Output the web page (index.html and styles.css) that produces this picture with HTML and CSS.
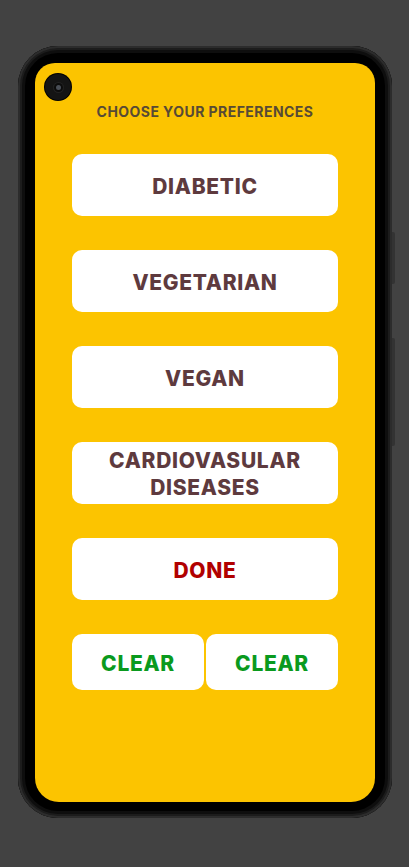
FILE: index.html
```html
<!DOCTYPE html>
<html lang="en">
<head>
<meta charset="utf-8">
<title>Choose your preferences</title>
<link rel="stylesheet" href="styles.css">
</head>
<body>
<div class="phone">
  <span class="side-btn vol"></span>
  <span class="side-btn power"></span>
  <div class="screen">
    <span class="camera"><span class="lens"></span></span>
    <h1 class="title">CHOOSE YOUR PREFERENCES</h1>
    <div class="options">
      <button class="opt">DIABETIC</button>
      <button class="opt">VEGETARIAN</button>
      <button class="opt">VEGAN</button>
      <button class="opt two-line">CARDIOVASULAR<br>DISEASES</button>
      <button class="opt done">DONE</button>
      <div class="clear-row">
        <button class="opt clear">CLEAR</button>
        <button class="opt clear">CLEAR</button>
      </div>
    </div>
  </div>
</div>
</body>
</html>
```
FILE: styles.css
```css
html, body {
  margin: 0;
  padding: 0;
  background: #424242;
  width: 409px;
  height: 867px;
  overflow: hidden;
}
body {
  padding-top: 46px;
  box-sizing: border-box;
  font-family: Inter, "Noto Sans", sans-serif;
}
.phone {
  position: relative;
  margin-left: 18px;
  width: 374px;
  height: 772px;
  box-sizing: border-box;
  padding: 17px;
  border-radius: 40px;
  background: #000;
  box-shadow: inset 0 0 0 2px #2c2c2c, inset 0 0 0 4px #1c1c1c, inset 0 0 0 7px #0e0e0e;
}
.side-btn {
  position: absolute;
  right: -3px;
  width: 3px;
  background: #333;
  border-radius: 0 2px 2px 0;
}
.side-btn.vol { top: 186px; height: 52px; }
.side-btn.power { top: 292px; height: 108px; }
.screen {
  position: relative;
  width: 340px;
  height: 739px;
  background: #fcc400;
  border-radius: 20px 20px 24px 24px;
  display: flex;
  flex-direction: column;
  align-items: center;
}
.camera {
  position: absolute;
  left: 10px;
  top: 11px;
  width: 26px;
  height: 26px;
  border-radius: 50%;
  background: #141414;
  box-shadow: 0 0 0 1px #000;
  display: flex;
  align-items: center;
  justify-content: center;
}
.lens {
  width: 5px;
  height: 5px;
  border-radius: 50%;
  background: #4a4f57;
  box-shadow: 0 0 0 2px #0c0c0c, 0 0 0 3px #222;
}
.title {
  margin: 40px 0 0;
  font-size: 14px;
  line-height: 18px;
  font-weight: 700;
  color: #574a35;
  letter-spacing: 0.45px;
}
.options {
  margin-top: 33px;
  width: 266px;
  display: flex;
  flex-direction: column;
  gap: 34px;
}
.opt {
  height: 62px;
  border: none;
  border-radius: 10px;
  background: #fff;
  font-family: inherit;
  font-size: 21px;
  font-weight: 800;
  letter-spacing: 0.7px;
  color: #5e3a3e;
  padding: 2px 0 0;
  line-height: 27px;
}
.done { color: #b10000; }
.clear-row {
  display: flex;
  gap: 2px;
}
.clear {
  flex: 1;
  height: 56px;
  color: #0a9a1e;
}
```
